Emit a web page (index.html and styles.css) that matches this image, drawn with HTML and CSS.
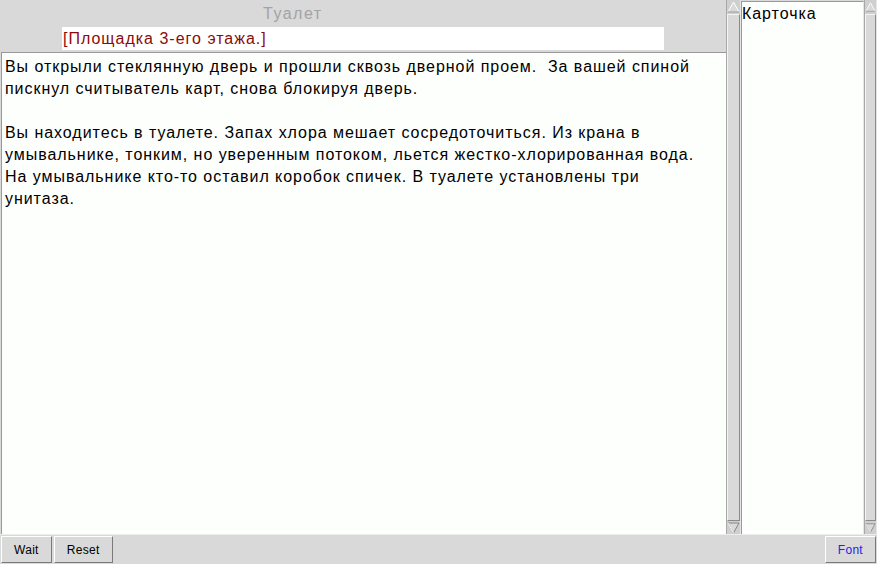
FILE: index.html
```html
<!DOCTYPE html>
<html lang="ru">
<head>
<meta charset="utf-8">
<title>Туалет</title>
<link rel="stylesheet" href="styles.css">
</head>
<body>
<div class="app">
  <div class="main">
    <div class="left">
      <div class="title">Туалет</div>
      <div class="where-row"><div class="where">[Площадка 3-его этажа.]</div></div>
      <div class="story">
        <p>Вы открыли стеклянную дверь и прошли сквозь дверной проем.&nbsp; За вашей спиной пискнул считыватель карт, снова блокируя дверь.</p>
        <p>Вы находитесь в туалете. Запах хлора мешает сосредоточиться. Из крана в умывальнике, тонким, но уверенным потоком, льется жестко-хлорированная вода. На умывальнике кто-то оставил коробок спичек. В туалете установлены три унитаза.</p>
      </div>
    </div>
    <div class="sb">
      <div class="arrow up"><svg width="13" height="12" viewBox="0 0 13 12"><polygon points="6.5,1 12,11 1,11" fill="#d9d9d9" stroke="#fff" stroke-width="1"/><polyline points="12,11 1,11" stroke="#888" fill="none"/></svg></div>
      <div class="thumb"></div>
      <div class="arrow down"><svg width="13" height="12" viewBox="0 0 13 12"><polygon points="1,1 12,1 6.5,11" fill="#d9d9d9" stroke="#888" stroke-width="1"/><polyline points="1,1 6.5,11" stroke="#fff" fill="none"/></svg></div>
    </div>
    <div class="inv">
      <div class="inv-item">Карточка</div>
    </div>
    <div class="sb">
      <div class="arrow up"><svg width="13" height="12" viewBox="0 0 13 12"><polygon points="6.5,1 12,11 1,11" fill="#d9d9d9" stroke="#fff" stroke-width="1"/><polyline points="12,11 1,11" stroke="#888" fill="none"/></svg></div>
      <div class="thumb"></div>
      <div class="arrow down"><svg width="13" height="12" viewBox="0 0 13 12"><polygon points="1,1 12,1 6.5,11" fill="#d9d9d9" stroke="#888" stroke-width="1"/><polyline points="1,1 6.5,11" stroke="#fff" fill="none"/></svg></div>
    </div>
  </div>
  <div class="bar">
    <button class="btn">Wait</button>
    <button class="btn">Reset</button>
    <span class="spacer"></span>
    <button class="btn font">Font</button>
  </div>
</div>
</body>
</html>
```
FILE: styles.css
```css
html, body {
  margin: 0;
  padding: 0;
  background: #d9d9d9;
}
body {
  font-family: "Liberation Sans", Arial, sans-serif;
  width: 877px;
  height: 564px;
  overflow: hidden;
}
.app {
  display: flex;
  flex-direction: column;
  height: 564px;
}
.main {
  display: grid;
  grid-template-columns: 726px 15px 123px 13px;
  height: 534px;
}
.left {
  display: flex;
  flex-direction: column;
  min-height: 0;
}
.title {
  height: 27px;
  line-height: 27px;
  font-size: 16px;
  color: #a3a3a3;
  padding-left: 263px;
  letter-spacing: 1.5px;
}
.where-row {
  height: 25px;
  padding-left: 62px;
}
.where {
  width: 602px;
  height: 23px;
  background: #ffffff;
  color: #8b0a0a;
  font-size: 16px;
  line-height: 24px;
  padding-left: 1px;
  box-sizing: border-box;
  letter-spacing: 1px;
}
.story {
  flex: 1;
  background: #fdfffd;
  border-top: 1px solid #9a9a9a;
  border-left: 1px solid #9a9a9a;
  margin-left: 1px;
  padding: 3px 16px 0 3px;
  font-size: 16px;
  line-height: 22px;
  color: #000;
  letter-spacing: 0.95px;
}
.story p {
  margin: 0 0 22px 0;
}
.sb {
  display: flex;
  flex-direction: column;
  background: #cfcfcf;
  border-left: 1px solid #a8a8a8;
  border-right: 1px solid #e6e6e6;
  box-sizing: border-box;
  padding-top: 1px;
}
.arrow {
  height: 12px;
  display: flex;
  justify-content: center;
}
.arrow svg {
  display: block;
}
.thumb {
  flex: 1;
  margin: 1px 0;
  background: #d9d9d9;
  border-top: 1px solid #f4f4f4;
  border-left: 1px solid #f4f4f4;
  border-right: 1px solid #8a8a8a;
  border-bottom: 1px solid #8a8a8a;
}
.inv {
  background: #fdfffd;
  border: 1px solid #9a9a9a;
  border-right-color: #e6e6e6;
  border-bottom: none;
  margin-top: 1px;
}
.inv-item {
  font-size: 16px;
  line-height: 22px;
  letter-spacing: 0.95px;
  margin-top: 1px;
}
.bar {
  display: flex;
  align-items: center;
  height: 30px;
  gap: 2px;
  padding: 0 1px;
  border-top: 1px solid #ececec;
  box-sizing: border-box;
}
.spacer {
  flex: 1;
}
.btn {
  font-family: "Liberation Sans", Arial, sans-serif;
  font-size: 12px;
  letter-spacing: 0.3px;
  height: 27px;
  padding: 0 12px;
  background: #d9d9d9;
  color: #000;
  border-top: 1px solid #ffffff;
  border-left: 1px solid #ffffff;
  border-right: 1px solid #7a7a7a;
  border-bottom: 1px solid #7a7a7a;
  border-radius: 0;
  margin: 0;
}
.btn.font {
  color: #2323e6;
  padding: 0 12px;
}
```
